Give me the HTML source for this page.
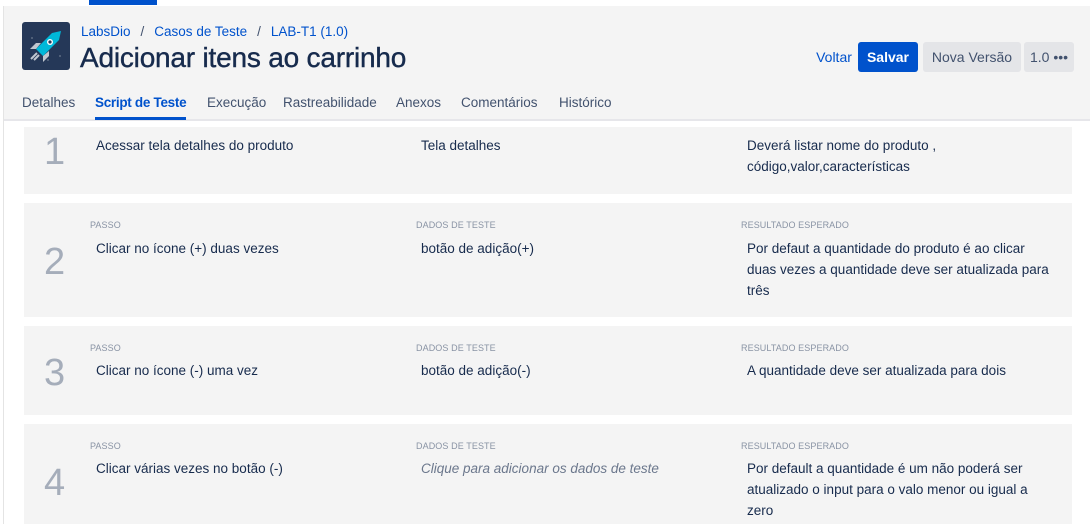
<!DOCTYPE html>
<html><head><meta charset="utf-8"><style>
*{margin:0;padding:0;box-sizing:border-box}
html,body{width:1090px;height:524px;overflow:hidden}
body{background:#fff;font-family:"Liberation Sans",Arial,sans-serif;position:relative;color:#172b4d}
.top{position:absolute;left:0;top:0;width:1090px;height:6px;background:#fff}
.topbar{position:absolute;left:89px;top:0;width:68px;height:5px;background:#0052cc}
.hdr{position:absolute;left:4px;top:6px;width:1086px;height:113px;background:#f4f4f4}
.lborder{position:absolute;left:3px;top:6px;width:1px;height:518px;background:#e4e4e4}
.hline{position:absolute;left:4px;top:119px;width:1086px;height:2px;background:#e6e6ea}
.logo{position:absolute;left:22px;top:22px;width:48px;height:48px;background:#253858;border-radius:3px}
.bc{position:absolute;left:81px;top:24px;font-size:13.5px;color:#0052cc}
.bc span{color:#42526e;margin:0 10px}
h1{position:absolute;left:80px;top:42px;font-size:28px;font-weight:normal;color:#172b4d;letter-spacing:-0.2px;-webkit-text-stroke:0.4px #172b4d}
.tabs{position:absolute;left:22px;top:95px;font-size:13.5px;color:#42526e}
.tabs span{position:absolute;white-space:nowrap}
.act{color:#0052cc;font-weight:bold;letter-spacing:-0.3px}
.ul{position:absolute;left:95px;top:117px;width:91px;height:3px;background:#0052cc}
.btn{position:absolute;top:42px;height:30px;line-height:30px;font-size:14px;border-radius:3px;text-align:center}
.card{position:absolute;left:24px;width:1048px;background:#f4f4f4;overflow:hidden}
.num{position:absolute;left:20px;font-size:38px;color:#a5adba;font-weight:300}
.lbl{position:absolute;font-size:9px;color:#8993a4;letter-spacing:0.1px}
.t{position:absolute;font-size:13.5px;color:#172b4d;line-height:21px;white-space:nowrap}
.it{font-style:italic;color:#6b778c}
</style></head><body>
<div class="top"></div><div class="topbar"></div>
<div class="hdr"></div><div class="lborder"></div><div class="hline"></div>
<div class="logo"><svg width="48" height="48" viewBox="0 0 48 48">
<circle cx="10" cy="16" r="1" fill="#5e6c84"/><circle cx="38" cy="34" r="1" fill="#5e6c84"/><circle cx="26" cy="38" r="1" fill="#5e6c84"/><circle cx="36" cy="12" r="1" fill="#5e6c84"/>
<path d="M39 9 L30 11 L14 27 L21 34 L37 18 Z" fill="#00b8d9"/>
<path d="M14 27 L8 27 L14 21 L19 21 Z" fill="#c1c7d0"/><path d="M21 34 L21 40 L27 34 L27 29 Z" fill="#c1c7d0"/>
<path d="M15 31 L9 37 M17 33 L12 38" stroke="#c1c7d0" stroke-width="2"/>
<circle cx="28" cy="20" r="3" fill="#fff"/><circle cx="28" cy="20" r="1.6" fill="#253858"/></svg></div>
<div class="bc">LabsDio<span>/</span>Casos de Teste<span>/</span>LAB-T1 (1.0)</div>
<h1>Adicionar itens ao carrinho</h1>
<div class="btn" style="left:814px;width:40px;color:#0052cc">Voltar</div>
<div class="btn" style="left:858px;width:60px;background:#0052cc;color:#fff;font-weight:bold">Salvar</div>
<div class="btn" style="left:923px;width:98px;background:#e4e5e8;color:#42526e">Nova Versão</div>
<div class="btn" style="left:1024px;width:50px;background:#e4e5e8;color:#42526e">1.0 •••</div>
<div class="tabs">
<span style="left:0">Detalhes</span><span class="act" style="left:73px">Script de Teste</span><span style="left:185px">Execução</span><span style="left:261px">Rastreabilidade</span><span style="left:374px">Anexos</span><span style="left:439px">Comentários</span><span style="left:537px">Histórico</span></div>
<div class="ul"></div>

<div class="card" style="top:127px;height:67px">
<div class="num" style="top:4px">1</div>
<div class="t" style="left:72px;top:8px">Acessar tela detalhes do produto</div>
<div class="t" style="left:397px;top:8px">Tela detalhes</div>
<div class="t" style="left:723px;top:8px">Deverá listar nome do produto ,<br>código,valor,características</div></div>

<div class="card" style="top:203px;height:114px">
<div class="lbl" style="left:66px;top:17px">PASSO</div><div class="lbl" style="left:392px;top:17px">DADOS DE TESTE</div><div class="lbl" style="left:717px;top:17px">RESULTADO ESPERADO</div>
<div class="num" style="top:38px">2</div>
<div class="t" style="left:72px;top:35px">Clicar no ícone (+) duas vezes</div>
<div class="t" style="left:397px;top:35px">botão de adição(+)</div>
<div class="t" style="left:723px;top:35px">Por defaut a quantidade do produto é ao clicar<br>duas vezes a quantidade deve ser atualizada para<br>três</div></div>

<div class="card" style="top:326px;height:89px">
<div class="lbl" style="left:66px;top:17px">PASSO</div><div class="lbl" style="left:392px;top:17px">DADOS DE TESTE</div><div class="lbl" style="left:717px;top:17px">RESULTADO ESPERADO</div>
<div class="num" style="top:26px">3</div>
<div class="t" style="left:72px;top:34px">Clicar no ícone (-) uma vez</div>
<div class="t" style="left:397px;top:34px">botão de adição(-)</div>
<div class="t" style="left:723px;top:34px">A quantidade deve ser atualizada para dois</div></div>

<div class="card" style="top:424px;height:100px">
<div class="lbl" style="left:66px;top:17px">PASSO</div><div class="lbl" style="left:392px;top:17px">DADOS DE TESTE</div><div class="lbl" style="left:717px;top:17px">RESULTADO ESPERADO</div>
<div class="num" style="top:38px">4</div>
<div class="t" style="left:72px;top:34px">Clicar várias vezes no botão (-)</div>
<div class="t it" style="left:397px;top:34px">Clique para adicionar os dados de teste</div>
<div class="t" style="left:723px;top:34px">Por default a quantidade é um não poderá ser<br>atualizado o input para o valo menor ou igual a<br>zero</div></div>
</body></html>
